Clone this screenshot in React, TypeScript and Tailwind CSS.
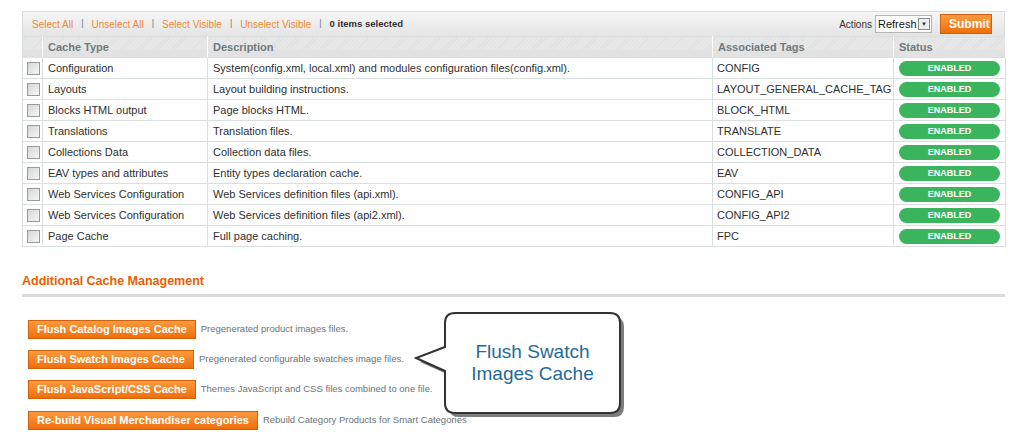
import React from 'react'

const rows = [
  { type: 'Configuration', desc: 'System(config.xml, local.xml) and modules configuration files(config.xml).', tag: 'CONFIG' },
  { type: 'Layouts', desc: 'Layout building instructions.', tag: 'LAYOUT_GENERAL_CACHE_TAG' },
  { type: 'Blocks HTML output', desc: 'Page blocks HTML.', tag: 'BLOCK_HTML' },
  { type: 'Translations', desc: 'Translation files.', tag: 'TRANSLATE' },
  { type: 'Collections Data', desc: 'Collection data files.', tag: 'COLLECTION_DATA' },
  { type: 'EAV types and attributes', desc: 'Entity types declaration cache.', tag: 'EAV' },
  { type: 'Web Services Configuration', desc: 'Web Services definition files (api.xml).', tag: 'CONFIG_API' },
  { type: 'Web Services Configuration', desc: 'Web Services definition files (api2.xml).', tag: 'CONFIG_API2' },
  { type: 'Page Cache', desc: 'Full page caching.', tag: 'FPC' },
]

const actions = [
  { label: 'Flush Catalog Images Cache', note: 'Pregenerated product images files.' },
  { label: 'Flush Swatch Images Cache', note: 'Pregenerated configurable swatches image files.' },
  { label: 'Flush JavaScript/CSS Cache', note: 'Themes JavaScript and CSS files combined to one file.' },
  { label: 'Re-build Visual Merchandiser categories', note: 'Rebuild Category Products for Smart Categories' },
]

function Checkbox() {
  return (
    <span className="block w-[13px] h-[13px] border border-[#9a9a9a] bg-gradient-to-br from-[#d6d6d6] to-[#f6f6f6]" />
  )
}

function OrangeButton({ children, className = '' }: { children: React.ReactNode; className?: string }) {
  return (
    <button
      className={
        'h-[19px] px-[8px] border border-[#d2600a] bg-gradient-to-b from-[#fb9a3c] to-[#ef6f06] text-white font-bold text-[11px] leading-none whitespace-nowrap ' +
        className
      }
    >
      {children}
    </button>
  )
}

const headCell =
  'h-[21px] px-[5px] text-left font-bold text-[11px] text-[#6e7a80] border-r border-white bg-[linear-gradient(to_bottom,transparent_60%,#e2e2e2_60%),repeating-linear-gradient(135deg,#e9e9e9_0px,#e9e9e9_2px,#dedede_2px,#dedede_3px)]'

function Sep() {
  return <span className="text-[#777] text-[9px]">|</span>
}

export default function App() {
  return (
    <div className="relative w-[1024px] h-[445px] bg-white font-['Liberation_Sans',Arial,sans-serif] text-[#2f2f2f] pt-[11px] pl-[22px] pr-[19px] overflow-hidden">
      {/* mass action toolbar */}
      <div className="flex items-center justify-between h-[25px] pl-[9px] pr-[12px] border-t border-x border-[#dcdcdc] bg-gradient-to-b from-[#f6f6f6] to-[#e4e4e4]">
        <div className="flex items-center text-[10px] gap-[8px]">
          <span className="text-[#f08a34]">Select All</span>
          <Sep />
          <span className="text-[#f08a34]">Unselect All</span>
          <Sep />
          <span className="text-[#f08a34]">Select Visible</span>
          <Sep />
          <span className="text-[#f08a34]">Unselect Visible</span>
          <Sep />
          <span className="font-bold text-[#333] text-[9.5px]">0 items selected</span>
        </div>
        <div className="flex items-center">
          <span className="text-[10px] text-[#333] mr-[3px]">Actions</span>
          <div className="flex items-center h-[18px] w-[57px] border border-[#b5b5b5] bg-white pl-[2px] pr-[1px]">
            <span className="text-[11px] leading-none text-[#111]">Refresh</span>
            <span className="ml-auto w-[12px] h-[12px] border border-[#888] bg-[#eee] flex items-center justify-center text-[6px] leading-none">▼</span>
          </div>
          <OrangeButton className="ml-[8px] h-[20px] w-[52px] text-[12px]">Submit</OrangeButton>
        </div>
      </div>

      {/* cache grid */}
      <table className="table-fixed border-collapse w-[983px] border border-[#dadfe0] text-[11px]">
        <colgroup>
          <col className="w-[20px]" />
          <col className="w-[165px]" />
          <col className="w-[505px]" />
          <col className="w-[181px]" />
          <col className="w-[112px]" />
        </colgroup>
        <thead>
          <tr>
            <th className={headCell}></th>
            <th className={headCell}>Cache Type</th>
            <th className={headCell}>Description</th>
            <th className={headCell}>Associated Tags</th>
            <th className={headCell + ' text-[#3f4a50]'}>Status</th>
          </tr>
        </thead>
        <tbody>
          {rows.map((r, i) => (
            <tr key={i} className="h-[21px] border-t border-[#dadfe0]">
              <td className="border-r border-[#dadfe0] pl-[4px]">
                <Checkbox />
              </td>
              <td className="border-r border-[#dadfe0] px-[5px] whitespace-nowrap">{r.type}</td>
              <td className="border-r border-[#dadfe0] px-[5px] whitespace-nowrap">{r.desc}</td>
              <td className="border-r border-[#dadfe0] px-[4px] whitespace-nowrap">{r.tag}</td>
              <td className="px-[5px]">
                <span className="flex items-center justify-center h-[15px] rounded-full bg-[#3bb55d] text-white font-bold text-[9px] leading-none">
                  ENABLED
                </span>
              </td>
            </tr>
          ))}
        </tbody>
      </table>

      {/* additional cache management */}
      <h2 className="mt-[28px] text-[12.5px] font-bold text-[#eb5e00] leading-none">Additional Cache Management</h2>
      <div className="mt-[6px] h-[3px] bg-[#dadada]" />

      <div className="mt-[23px] pl-[6px] flex flex-col gap-[11px]">
        {actions.map((a, i) => (
          <div key={i} className={'flex items-center gap-[5px] ' + (i === 3 ? 'mt-[1px]' : '')}>
            <OrangeButton>{a.label}</OrangeButton>
            <span className="text-[9.5px] text-[#6b747a]">{a.note}</span>
          </div>
        ))}
      </div>

      {/* callout */}
      <div className="absolute left-[414px] top-[311px] w-[214px] h-[110px]">
        <svg width="214" height="110" viewBox="0 0 214 110" className="absolute inset-0">
          <path
            d="M45,6 H200 Q210,6 210,16 V96 Q210,106 200,106 H45 Q35,106 35,96 V64 L6,51 L35,40 V16 Q35,6 45,6 Z"
            fill="#7d7d7d"
          />
          <path
            d="M41,2 H196 Q206,2 206,12 V92 Q206,102 196,102 H41 Q31,102 31,92 V60 L2,47 L31,36 V12 Q31,2 41,2 Z"
            fill="#ffffff"
            stroke="#333333"
            strokeWidth="2"
          />
        </svg>
        <div className="absolute left-[31px] top-[2px] w-[175px] h-[100px] flex flex-col items-center justify-center text-[19px] leading-[22px] text-[#1f6b9a]">
          <span>Flush Swatch</span>
          <span>Images Cache</span>
        </div>
      </div>
    </div>
  )
}
